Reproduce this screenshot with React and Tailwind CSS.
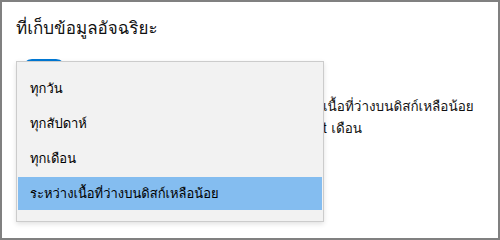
import React from 'react'

const options = ['ทุกวัน', 'ทุกสัปดาห์', 'ทุกเดือน', 'ระหว่างเนื้อที่ว่างบนดิสก์เหลือน้อย']

const App = () => {
  const selected = 3

  return (
    <div
      className="relative w-[500px] h-[240px] overflow-hidden border-2 border-[#808080] bg-white text-[#111]"
      style={{ fontFamily: 'Tahoma, Loma, Garuda, "Noto Sans Thai Looped", "Noto Serif Thai", "Noto Sans Thai", "Noto Sans", sans-serif' }}
    >
      {/* Page behind the menu */}
      <div className="px-[14px] pt-[12px]">
        <h1 className="text-[17px] leading-[28px] font-normal">ที่เก็บข้อมูลอัจฉริยะ</h1>
        <div className="mt-[17px] flex items-center gap-3">
          <div className="w-[44px] h-[20px] rounded-full bg-[#0078d4] ml-[6px]" />
          <span className="text-[13px]">เปิด</span>
        </div>
        <div className="mt-[16px] text-[13.5px] leading-[22px] whitespace-nowrap">
          <p className="flex">
            <span className="w-[307px] shrink-0 overflow-hidden pl-[120px]">เรียกใช้ Storage Sense</span>
            <span>เนื้อที่ว่างบนดิสก์เหลือน้อย</span>
          </p>
          <p className="flex">
            <span className="w-[307px] shrink-0 overflow-hidden pl-[120px]">ค่าเริ่มต้น Defaul</span>
            <span>t เดือน</span>
          </p>
        </div>
      </div>

      {/* Open dropdown menu */}
      <div className="absolute left-[14px] top-[59px] w-[308px] h-[161px] border border-[#cccccc] bg-[#f2f2f2] shadow-[0_2px_5px_rgba(0,0,0,0.12)] px-px pt-[9px]">
        {options.map((opt, i) => (
          <div
            key={opt}
            className={`flex items-center pl-[12px] text-[13px] text-black ${
              i === selected ? 'bg-[#84bdf0] mt-[1px] h-[33px]' : 'h-[35px]'
            }`}
          >
            {opt}
          </div>
        ))}
      </div>
    </div>
  )
}

export default App
